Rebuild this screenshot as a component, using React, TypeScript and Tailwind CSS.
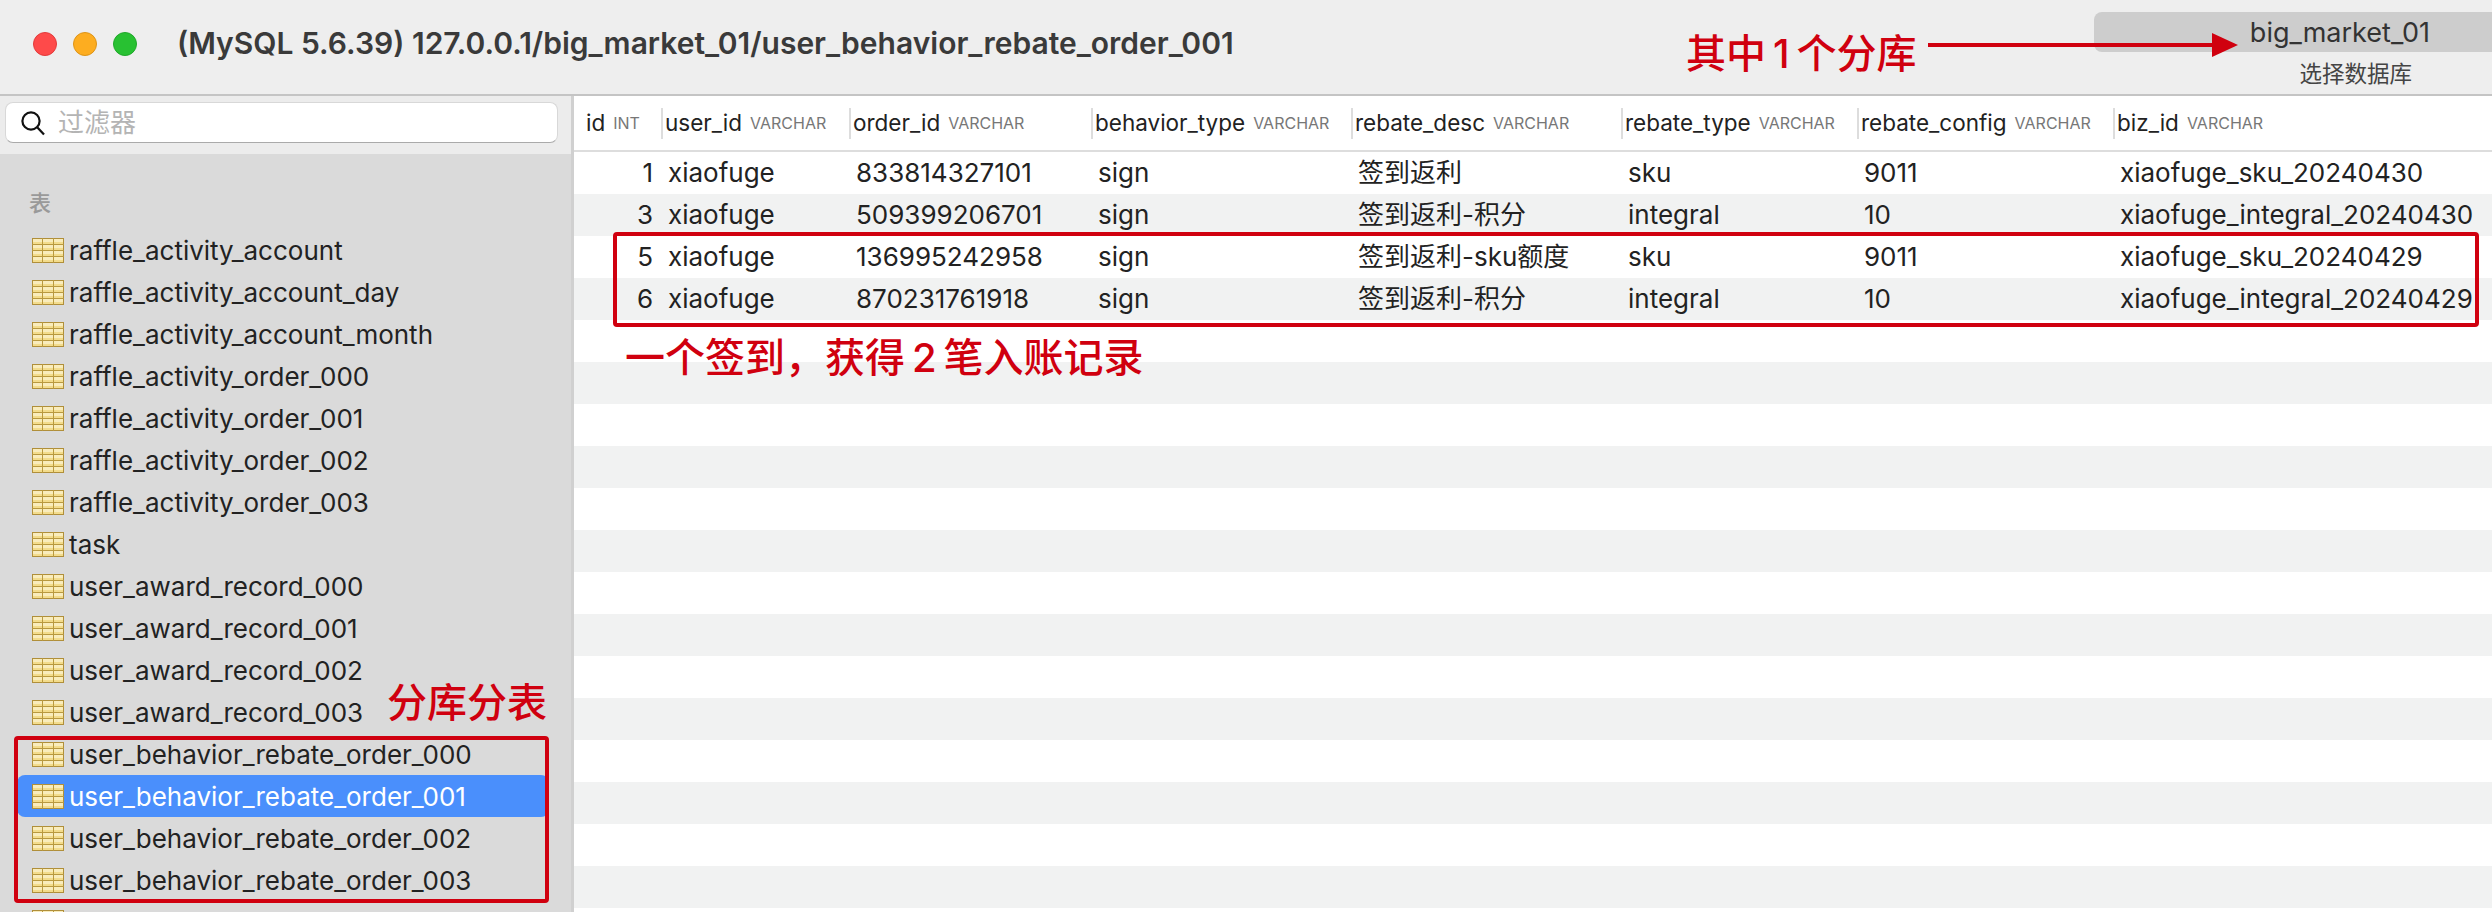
const FONT = "font-['Inter','Noto_Sans_CJK_SC',sans-serif]";

const TABLES = [
  'raffle_activity_account',
  'raffle_activity_account_day',
  'raffle_activity_account_month',
  'raffle_activity_order_000',
  'raffle_activity_order_001',
  'raffle_activity_order_002',
  'raffle_activity_order_003',
  'task',
  'user_award_record_000',
  'user_award_record_001',
  'user_award_record_002',
  'user_award_record_003',
  'user_behavior_rebate_order_000',
  'user_behavior_rebate_order_001',
  'user_behavior_rebate_order_002',
  'user_behavior_rebate_order_003',
  '',
];

const COLUMNS = [
  { name: 'id', type: 'INT', width: 'w-[87px]' },
  { name: 'user_id', type: 'VARCHAR', width: 'w-[188px]' },
  { name: 'order_id', type: 'VARCHAR', width: 'w-[242px]' },
  { name: 'behavior_type', type: 'VARCHAR', width: 'w-[260px]' },
  { name: 'rebate_desc', type: 'VARCHAR', width: 'w-[270px]' },
  { name: 'rebate_type', type: 'VARCHAR', width: 'w-[236px]' },
  { name: 'rebate_config', type: 'VARCHAR', width: 'w-[256px]' },
  { name: 'biz_id', type: 'VARCHAR', width: 'w-[379px]' },
];

const ROWS = [
  ['1', 'xiaofuge', '833814327101', 'sign', '签到返利', 'sku', '9011', 'xiaofuge_sku_20240430'],
  ['3', 'xiaofuge', '509399206701', 'sign', '签到返利-积分', 'integral', '10', 'xiaofuge_integral_20240430'],
  ['5', 'xiaofuge', '136995242958', 'sign', '签到返利-sku额度', 'sku', '9011', 'xiaofuge_sku_20240429'],
  ['6', 'xiaofuge', '870231761918', 'sign', '签到返利-积分', 'integral', '10', 'xiaofuge_integral_20240429'],
];

function TableIcon() {
  return (
    <svg width="32" height="25" viewBox="0 0 32 25" className="shrink-0">
      <rect x="0.5" y="0.5" width="31" height="24" fill="#f3dc8c" stroke="#b08f3a" />
      {[1, 7, 13, 19].map((y) => (
        <rect key={y} x="1" y={y} width="30" height="3" fill="#f9ecbc" />
      ))}
      {[6.5, 12.5, 18.5].map((y) => (
        <line key={y} x1="0" x2="32" y1={y} y2={y} stroke="#b9993f" />
      ))}
      {[10.5, 21.5].map((x) => (
        <line key={x} x1={x} x2={x} y1="0" y2="25" stroke="#b9993f" />
      ))}
    </svg>
  );
}

function Sidebar() {
  return (
    <aside className="flex flex-col w-[571px] shrink-0 h-full">
      <div className="h-[58px] bg-[#ececec] pt-[6px] pl-[5px] pr-[13px]">
        <div className="flex items-center h-[41px] bg-white rounded-lg border border-[#d8d8d8] border-b-[#aaaaaa] pl-[14px]">
          <svg width="26" height="26" viewBox="0 0 26 26" fill="none" stroke="#111" strokeWidth="2.2">
            <circle cx="11" cy="11" r="8.6" />
            <line x1="17.2" y1="17.2" x2="24" y2="24.5" />
          </svg>
          <span className="ml-[12px] text-[26px] leading-none text-[#b4b4b4]">过滤器</span>
        </div>
      </div>
      <div className="flex-1 bg-[#dadada] overflow-hidden">
        <div className="h-[75px] pl-[29px] pt-[36px] text-[22px] leading-[26px] font-medium text-[#999999]">表</div>
        {TABLES.map((name, i) => (
          <div
            key={i}
            className={`flex items-center h-[42px] ml-[17px] mr-[22px] pl-[15px] rounded-lg ${
              i === 13 ? 'bg-[#4a8ffc] text-white' : 'text-[#222222]'
            }`}
          >
            <TableIcon />
            <span className="ml-[5px] pt-[2px] text-[26px] leading-none whitespace-nowrap">{name}</span>
          </div>
        ))}
      </div>
    </aside>
  );
}

function DataTable() {
  return (
    <main className="flex-1 min-w-0 h-full overflow-hidden bg-white">
      <div className="flex h-[56px] border-b-2 border-[#dddddd]">
        {COLUMNS.map((col, i) => (
          <div key={col.name} className={`${col.width} shrink-0 flex items-center h-[54px]`}>
            <div className={`flex items-center h-[31px] w-full whitespace-nowrap ${i > 0 ? 'border-l-2 border-[#dddddd] pl-[2px]' : 'pl-[12px]'}`}>
              <span className="text-[22.5px] leading-none text-[#222222]">{col.name}</span>
              <span className="ml-[8px] text-[16px] leading-none text-[#777777]">{col.type}</span>
            </div>
          </div>
        ))}
      </div>
      {Array.from({ length: 19 }).map((_, r) => (
        <div key={r} className={`flex h-[42px] items-center ${r % 2 === 1 ? 'bg-[#f1f2f2]' : 'bg-white'}`}>
          {COLUMNS.map((col, c) => (
            <div
              key={col.name}
              className={`${col.width} shrink-0 text-[26px] leading-none text-[#222222] whitespace-nowrap ${
                c === 0 ? 'text-right pr-[8px]' : 'pl-[7px]'
              }`}
            >
              {ROWS[r]?.[c]}
            </div>
          ))}
        </div>
      ))}
    </main>
  );
}

export default function App() {
  return (
    <div className={`relative w-[2492px] h-[912px] overflow-hidden flex flex-col ${FONT}`}>
      {/* title bar */}
      <header className="flex items-center h-[96px] shrink-0 bg-[#eeeeee] border-b-2 border-[#c4c4c4] pl-[33px]">
        <div className="flex gap-[16px] -mt-[6px]">
          <span className="w-[24px] h-[24px] rounded-full bg-[#fe4a4a] border border-[#e23b3b]" />
          <span className="w-[24px] h-[24px] rounded-full bg-[#fdad20] border border-[#dd9418]" />
          <span className="w-[24px] h-[24px] rounded-full bg-[#28c132] border border-[#20a82a]" />
        </div>
        <h1 className="ml-[40px] -mt-[8px] text-[30px] leading-none font-semibold text-[#3a3a3a] whitespace-nowrap">
          (MySQL 5.6.39) 127.0.0.1/big_market_01/user_behavior_rebate_order_001
        </h1>
        <div className="ml-auto flex flex-col items-end self-start pt-[12px]">
          <div className="flex items-center justify-end w-[398px] h-[40px] bg-[#cdcdcd] rounded-l-lg pr-[62px] text-[27px] leading-none text-[#333333]">
            big_market_01
          </div>
          <div className="w-[398px] text-right pr-[80px] mt-[11px] text-[22.5px] leading-none text-[#444444]">选择数据库</div>
        </div>
      </header>

      <div className="flex flex-1 min-h-0">
        <Sidebar />
        <div className="w-[3px] shrink-0 bg-[#d0d0d0]" />
        <DataTable />
      </div>

      {/* red annotations drawn over the screenshot */}
      <div className="absolute left-[1686px] top-[31px] text-[40px] leading-[46px] font-medium text-[#d0000f] whitespace-nowrap">其中{'\u2009'}1{'\u2009'}个分库</div>
      <svg className="absolute left-[1928px] top-[30px]" width="312" height="30" viewBox="0 0 312 30">
        <rect x="0" y="13" width="290" height="4" fill="#d0000f" />
        <polygon points="284,3 310,15 284,27" fill="#d0000f" />
      </svg>
      <div className="absolute left-[14px] top-[736px] w-[535px] h-[167px] border-4 border-[#d0000f] rounded-sm" />
      <div className="absolute left-[387px] top-[680px] text-[40px] leading-[46px] font-medium text-[#d0000f] whitespace-nowrap">分库分表</div>
      <div className="absolute left-[613px] top-[232px] w-[1866px] h-[95px] border-4 border-[#d0000f] rounded-sm" />
      <div className="absolute left-[625px] top-[336px] text-[40px] leading-[44px] font-medium text-[#d0000f] whitespace-nowrap">一个签到，获得{'\u2009'}2{'\u2009'}笔入账记录</div>
    </div>
  );
}
